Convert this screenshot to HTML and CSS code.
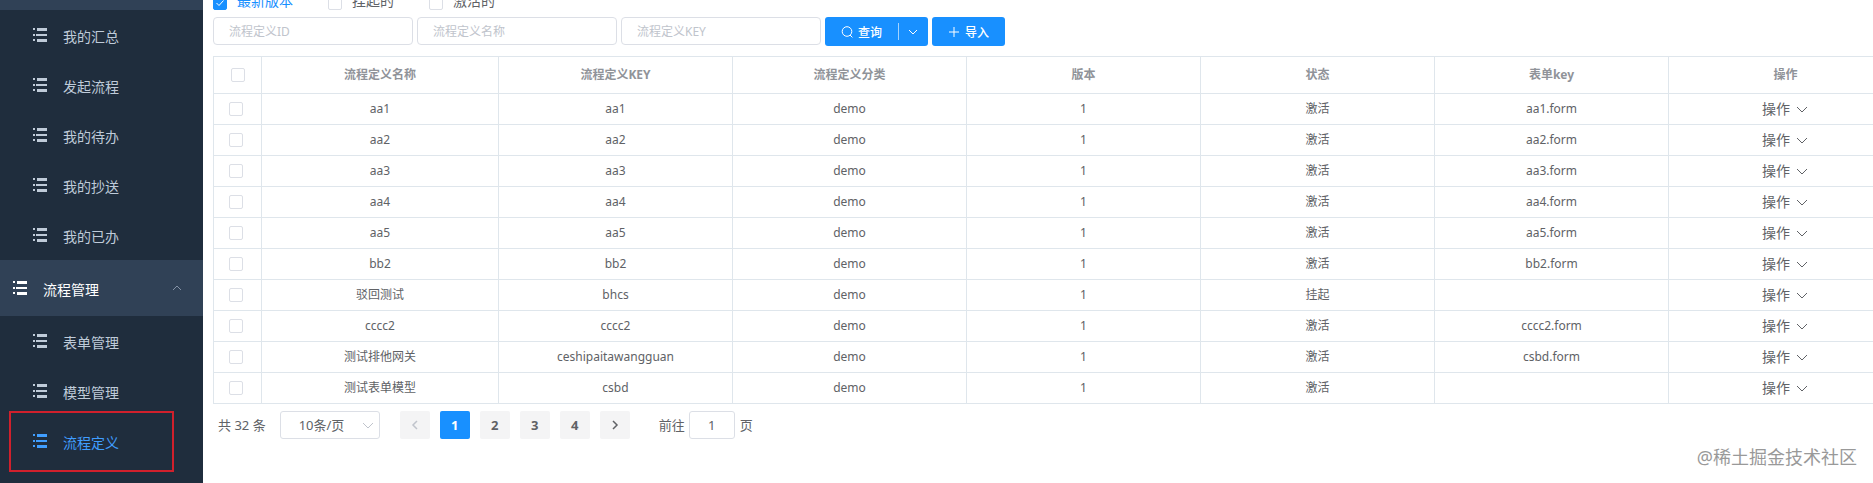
FILE: index.html
```html
<!DOCTYPE html>
<html lang="zh-CN">
<head>
    <meta charset="UTF-8">
    <meta name="viewport" content="width=device-width, initial-scale=1.0">
    <title>流程定义</title>
    <link rel="stylesheet" href="styles.css">
</head>
<body>
    <svg class="sprite" aria-hidden="true">
        <symbol id="icon-list" viewBox="0 0 14 14">
            <path fill="currentColor" d="M0 0h2v2H0zM4 0h10v3H4zM0 6h2v2H0zM3 6h11v2H3zM0 11h2v2H0zM4 11h10v3H4z"/>
        </symbol>
        <symbol id="icon-down" viewBox="0 0 14 14">
            <path fill="none" stroke="currentColor" d="M2 5l5 5 5-5"/>
        </symbol>
        <symbol id="icon-up" viewBox="0 0 14 14">
            <path fill="none" stroke="currentColor" d="M3 9l4-4 4 4"/>
        </symbol>
    </svg>
    <div class="layout">
        <nav class="sidebar">
            <div class="menu-strip"></div>
            <a class="menu-item" href="#"><svg class="icon"><use href="#icon-list"/></svg><span>我的汇总</span></a>
            <a class="menu-item" href="#"><svg class="icon"><use href="#icon-list"/></svg><span>发起流程</span></a>
            <a class="menu-item" href="#"><svg class="icon"><use href="#icon-list"/></svg><span>我的待办</span></a>
            <a class="menu-item" href="#"><svg class="icon"><use href="#icon-list"/></svg><span>我的抄送</span></a>
            <a class="menu-item" href="#"><svg class="icon"><use href="#icon-list"/></svg><span>我的已办</span></a>
            <button type="button" class="menu-group">
                <svg class="icon"><use href="#icon-list"/></svg><span>流程管理</span>
                <svg class="icon arrow"><use href="#icon-up"/></svg>
            </button>
            <a class="menu-item" href="#"><svg class="icon"><use href="#icon-list"/></svg><span>表单管理</span></a>
            <a class="menu-item" href="#"><svg class="icon"><use href="#icon-list"/></svg><span>模型管理</span></a>
            <a class="menu-item active" href="#"><svg class="icon"><use href="#icon-list"/></svg><span>流程定义</span></a>
        </nav>
        <main class="main">
            <div class="filters">
                <label class="check"><input type="checkbox" checked>最新版本</label>
                <label class="check"><input type="checkbox">挂起的</label>
                <label class="check"><input type="checkbox">激活的</label>
            </div>
            <form class="toolbar">
                <input class="field" type="text" placeholder="流程定义ID" aria-label="流程定义ID">
                <input class="field" type="text" placeholder="流程定义名称" aria-label="流程定义名称">
                <input class="field" type="text" placeholder="流程定义KEY" aria-label="流程定义KEY">
                <div class="split">
                    <button type="button" class="btn">
                        <svg class="btn-icon" viewBox="0 0 12 12"><circle cx="6" cy="5.5" r="4.8"/><path d="M9 9l2.4 2.4"/></svg>查询
                    </button>
                    <button type="button" class="btn btn-more" aria-label="更多">
                        <svg class="btn-icon" viewBox="0 0 12 12"><path d="M2 4l4 4 4-4"/></svg>
                    </button>
                </div>
                <button type="button" class="btn">
                    <svg class="btn-icon" viewBox="0 0 12 12"><path d="M6 1v10M1 6h10"/></svg>导入
                </button>
            </form>
            <table class="grid">
                <colgroup>
                    <col class="col-check">
                    <col class="col-name">
                    <col span="6">
                </colgroup>
                <thead>
                    <tr>
                        <th><input type="checkbox" aria-label="全选"></th>
                        <th>流程定义名称</th>
                        <th>流程定义KEY</th>
                        <th>流程定义分类</th>
                        <th>版本</th>
                        <th>状态</th>
                        <th>表单key</th>
                        <th>操作</th>
                    </tr>
                </thead>
                <tbody id="grid-body"></tbody>
            </table>
            <div class="pagination">
                <span class="total">共 32 条</span>
                <div class="page-size">
                    <select aria-label="每页条数"><option>10条/页</option><option>20条/页</option></select>
                    <svg class="icon"><use href="#icon-down"/></svg>
                </div>
                <div class="pager">
                    <button type="button" disabled aria-label="上一页"><svg viewBox="0 0 12 12"><path d="M8 2L4 6l4 4"/></svg></button>
                    <button type="button" class="current">1</button>
                    <button type="button">2</button>
                    <button type="button">3</button>
                    <button type="button">4</button>
                    <button type="button" aria-label="下一页"><svg viewBox="0 0 12 12"><path d="M4 2l4 4-4 4"/></svg></button>
                </div>
                <label class="jump">前往<input type="text" value="1">页</label>
            </div>
        </main>
        <div class="watermark">@稀土掘金技术社区</div>
    </div>
    <script>
        const rows = [
            ['aa1', 'aa1', '激活', 'aa1.form'],
            ['aa2', 'aa2', '激活', 'aa2.form'],
            ['aa3', 'aa3', '激活', 'aa3.form'],
            ['aa4', 'aa4', '激活', 'aa4.form'],
            ['aa5', 'aa5', '激活', 'aa5.form'],
            ['bb2', 'bb2', '激活', 'bb2.form'],
            ['驳回测试', 'bhcs', '挂起', ''],
            ['cccc2', 'cccc2', '激活', 'cccc2.form'],
            ['测试排他网关', 'ceshipaitawangguan', '激活', 'csbd.form'],
            ['测试表单模型', 'csbd', '激活', '']
        ];

        document.getElementById('grid-body').innerHTML = rows.map(([name, key, status, form]) => `
            <tr>
                <td><input type="checkbox" aria-label="${name}"></td>
                <td>${name}</td>
                <td>${key}</td>
                <td>demo</td>
                <td>1</td>
                <td>${status}</td>
                <td>${form}</td>
                <td><button type="button" class="action">操作<svg class="icon"><use href="#icon-down"/></svg></button></td>
            </tr>
        `).join('');
    </script>
</body>
</html>
```

FILE: styles.css
```css
* {
    box-sizing: border-box;
}
body {
    margin: 0;
    font-family: "Noto Sans", "Noto Sans CJK SC", sans-serif;
    font-size: 14px;
    color: #606266;
    background-color: #fff;
}
button, input, select {
    font-family: inherit;
    color: inherit;
}
button {
    border: none;
    background: none;
    padding: 0;
    cursor: pointer;
}
.sprite {
    display: none;
}
.icon {
    width: 14px;
    height: 14px;
    flex: none;
}
.layout {
    display: flex;
    min-height: 100vh;
    position: relative;
    overflow: hidden;
}

/* sidebar */
.sidebar {
    width: 203px;
    flex: none;
    background-color: #1f2d3d;
}
.menu-strip {
    height: 10px;
    background-color: #304156;
}
.menu-item, .menu-group {
    display: flex;
    align-items: center;
    gap: 16px;
    width: 100%;
    height: 50px;
    padding-left: 33px;
    font-size: 14px;
    line-height: 20px;
    color: #bfcbd9;
    text-decoration: none;
}
.menu-item span, .menu-group span {
    padding-top: 3px;
}
.menu-group {
    height: 56px;
    padding: 0 19px 0 13px;
    color: #fff;
    background-color: #304156;
}
.arrow {
    margin-left: auto;
    color: #8492a6;
}
.menu-item.active {
    position: relative;
    color: #409eff;
}
.menu-item.active::after {
    content: "";
    position: absolute;
    top: -5px;
    bottom: -6px;
    left: 9px;
    right: 29px;
    border: 2px solid #d0202c;
}

/* main */
.main {
    flex: 1;
    min-width: 0;
    padding-left: 10px;
}
input[type="checkbox"] {
    appearance: none;
    display: block;
    width: 14px;
    height: 14px;
    margin: 0;
    border: 1px solid #dcdfe6;
    border-radius: 2px;
    background-color: #fff;
}
input[type="checkbox"]:checked {
    border-color: #1890ff;
    background: #1890ff url("data:image/svg+xml,%3Csvg xmlns='http://www.w3.org/2000/svg' viewBox='0 0 12 12'%3E%3Cpath d='M2.5 6l2.5 2.5 4.5-5' fill='none' stroke='white'/%3E%3C/svg%3E");
}
.filters {
    display: flex;
    gap: 35px;
    height: 20px;
    margin-top: -7px;
}
.check {
    display: flex;
    align-items: flex-start;
    gap: 10px;
    line-height: 16px;
}
.check input[type="checkbox"] {
    margin-top: 3px;
}
.check:has(:checked) {
    color: #1890ff;
}
.toolbar {
    display: flex;
    gap: 4px;
    margin: 4px 0 10px;
}
.field {
    width: 200px;
    height: 28px;
    padding: 0 15px;
    border: 1px solid #dcdfe6;
    border-radius: 4px;
    font-size: 12px;
}
.field::placeholder {
    color: #c0c4cc;
}
.split {
    display: flex;
}
.btn {
    display: flex;
    align-items: center;
    gap: 5px;
    height: 29px;
    padding: 0 16px;
    border-radius: 3px;
    font-size: 12px;
    font-weight: 500;
    color: #fff;
    background-color: #1890ff;
}
.split .btn:first-child {
    border-radius: 3px 0 0 3px;
}
.btn-more {
    padding: 0 9px 0 0;
    border-radius: 0 3px 3px 0;
}
.btn-more::before {
    content: "";
    width: 1px;
    height: 17px;
    margin-right: 3px;
    background-color: #a3d3ff;
}
.btn-icon {
    width: 12px;
    height: 12px;
    fill: none;
    stroke: currentColor;
}

/* table */
.grid {
    width: calc(100% + 30px);
    table-layout: fixed;
    border-collapse: collapse;
    font-size: 12px;
    line-height: 20px;
    text-align: center;
}
.col-check {
    width: 48px;
}
.col-name {
    width: 237px;
}
.grid th, .grid td {
    height: 31px;
    padding: 0;
    border: 1px solid #dfe6ec;
}
.grid th {
    height: 37px;
    color: #909399;
}
.grid input {
    margin: 0 15px;
}
.grid th input {
    margin: 0 17px;
}
.action {
    display: inline-flex;
    align-items: center;
    gap: 5px;
    font-size: 14px;
    line-height: 20px;
    vertical-align: top;
}

/* pagination */
.pagination {
    display: flex;
    align-items: center;
    padding: 7px 5px;
    font-size: 13px;
    line-height: 28px;
}
.page-size {
    position: relative;
    width: 100px;
    margin: 0 20px 0 14px;
}
.page-size select {
    appearance: none;
    display: block;
    width: 100%;
    height: 28px;
    padding: 0 18px;
    border: 1px solid #dcdfe6;
    border-radius: 3px;
    font-size: 13px;
    background-color: #fff;
}
.page-size .icon {
    position: absolute;
    top: 7px;
    right: 5px;
    color: #c0c4cc;
    pointer-events: none;
}
.pager {
    display: flex;
    gap: 10px;
}
.pager button {
    display: flex;
    align-items: center;
    justify-content: center;
    width: 30px;
    height: 28px;
    border-radius: 2px;
    font-size: 13px;
    font-weight: bold;
    background-color: #f4f4f5;
}
.pager .current {
    color: #fff;
    background-color: #1890ff;
}
.pager button:disabled {
    color: #c0c4cc;
}
.pager svg {
    width: 12px;
    height: 12px;
    fill: none;
    stroke: currentColor;
    stroke-width: 1.5;
}
.jump {
    display: flex;
    align-items: center;
    margin-left: 29px;
}
.jump input {
    width: 46px;
    height: 28px;
    margin: 0 5px 0 4px;
    padding: 0;
    border: 1px solid #dcdfe6;
    border-radius: 3px;
    font-size: 13px;
    text-align: center;
}
.watermark {
    position: absolute;
    right: 16px;
    bottom: 14px;
    font-size: 18px;
    line-height: 24px;
    color: #999;
}
```
